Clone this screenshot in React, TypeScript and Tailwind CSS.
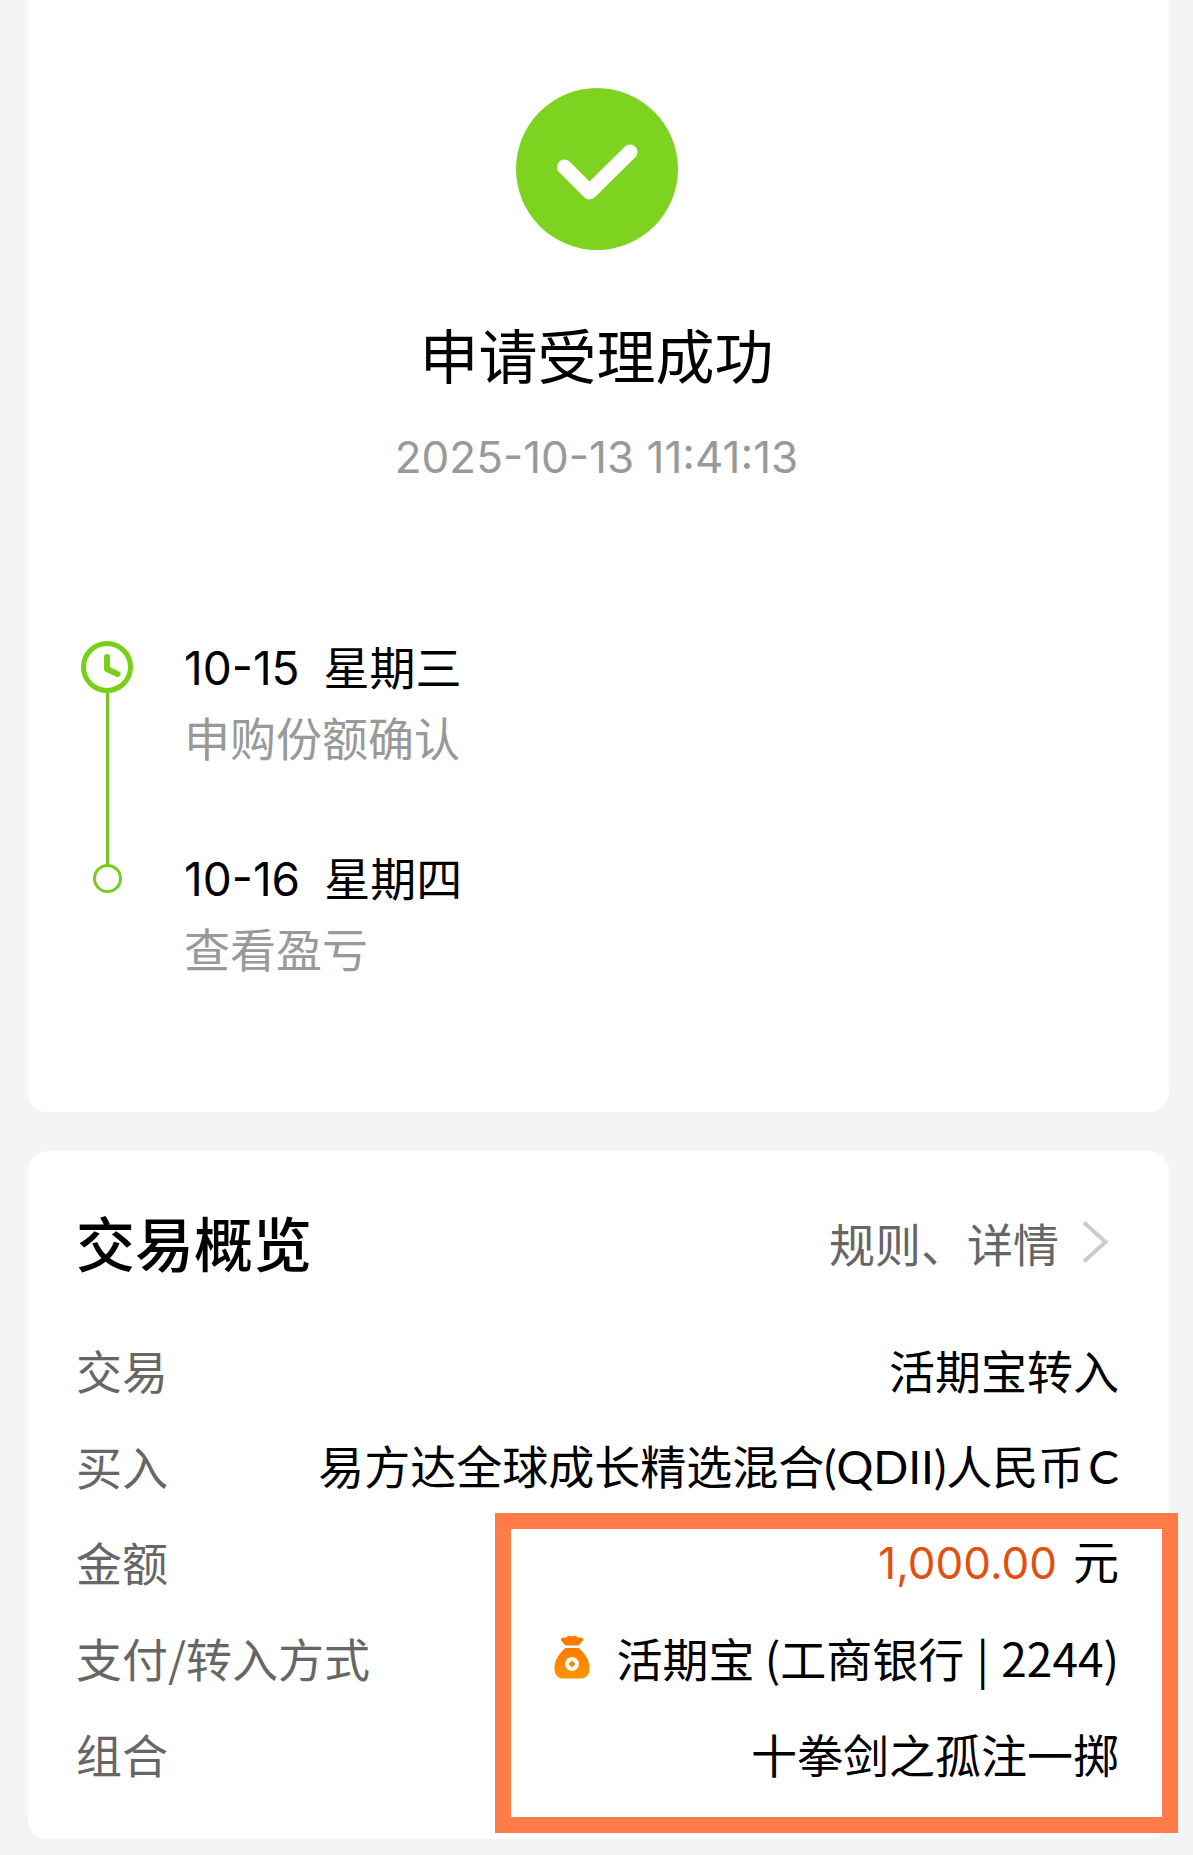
import type { ReactNode } from "react";

function SuccessIcon() {
  return (
    <svg className="size-[162px]" viewBox="0 0 162 162" aria-hidden="true">
      <circle cx="81" cy="81" r="81" fill="#7ed321" />
      <path
        d="M48.5 79 L73.5 104 L114 64"
        fill="none"
        stroke="#fff"
        strokeWidth="15"
        strokeLinecap="round"
        strokeLinejoin="round"
      />
    </svg>
  );
}

function ClockIcon() {
  return (
    <svg className="size-[52px] shrink-0" viewBox="0 0 52 52" fill="none" stroke="#76d016" aria-hidden="true">
      <circle cx="26" cy="26" r="23.5" strokeWidth="5" />
      <path d="M26 16 V28 L36.5 33" strokeWidth="6" strokeLinecap="round" strokeLinejoin="round" />
    </svg>
  );
}

function MoneyBagIcon() {
  return (
    <svg className="h-11 w-9 shrink-0" viewBox="0 0 36 44" aria-hidden="true">
      <defs>
        <linearGradient id="bag" x1="0" y1="0" x2="0" y2="1">
          <stop offset="0" stopColor="#ff7a00" />
          <stop offset="1" stopColor="#ff9500" />
        </linearGradient>
      </defs>
      <path
        d="M11.5 10.5 L7 5.5 C6.2 3 8.5 1.8 12 2.8 C13.5 0.2 16 0.2 18 1.4 C20 0.2 22.5 0.2 24 2.8 C27.5 1.8 29.8 3 29 5.5 L24.5 10.5 Z"
        fill="#ff7a00"
      />
      <path
        d="M11.5 13 H24.5 C30 17 35.5 25 35.5 32.5 C35.5 40 32.5 43.5 26.5 43.5 H9.5 C3.5 43.5 0.5 40 0.5 32.5 C0.5 25 6 17 11.5 13 Z"
        fill="url(#bag)"
      />
      <circle cx="18" cy="29" r="7" fill="#fffaf0" />
      <path d="M18 26 L21 29 L18 32 L15 29 Z" fill="#ff8a00" stroke="#ff8a00" strokeLinejoin="round" />
    </svg>
  );
}

function Chevron() {
  return (
    <svg className="h-11 w-7 shrink-0" viewBox="0 0 28 44" fill="none" stroke="#cccccc" strokeWidth="4" aria-hidden="true">
      <path d="M3 2.5 L24.5 22 L3 41.5" />
    </svg>
  );
}

function StepText({ date, day, note }: { date: string; day: string; note: string }) {
  return (
    <div className="leading-[71px]">
      <p className="flex h-[71px] items-baseline gap-6 text-black">
        <span className="font-['Inter','Noto_Sans_CJK_SC',sans-serif]">{date}</span>
        <span>{day}</span>
      </p>
      <p className="text-[#999999]">{note}</p>
    </div>
  );
}

function Row({ label, children }: { label: string; children: ReactNode }) {
  return (
    <div className="flex h-24 items-center justify-between">
      <dt className="whitespace-nowrap text-[#666666]">{label}</dt>
      <dd className="flex items-center whitespace-nowrap text-black">{children}</dd>
    </div>
  );
}

export default function App() {
  return (
    <main
      lang="zh-CN"
      className="min-h-screen bg-[#f4f4f4] pr-6 pb-4 pl-7 font-['Noto_Sans_CJK_SC',sans-serif] text-[46px] leading-[60px]"
    >
      <section className="rounded-b-[20px] bg-white px-12 pt-[88px] pb-[129px]">
        <header className="flex flex-col items-center pr-1">
          <SuccessIcon />
          <h1 className="mt-16 text-[59px] leading-[80px] text-black">申请受理成功</h1>
          <time className="mt-[33px] font-['Inter','Noto_Sans_CJK_SC',sans-serif] text-[44px] text-[#999999]">
            2025-10-13 11:41:13
          </time>
        </header>

        <ol className="mt-[143px] pl-0.5">
          <li className="flex gap-12">
            <div className="flex w-[58px] flex-col items-center pt-[11px]">
              <ClockIcon />
              <div className="w-[3px] grow bg-[#76c42a]" />
            </div>
            <div className="pb-[69px]">
              <StepText date="10-15" day="星期三" note="申购份额确认" />
            </div>
          </li>
          <li className="flex gap-12">
            <div className="flex w-[58px] flex-col items-center">
              <div className="h-[23px] w-[3px] bg-[#76c42a]" />
              <div className="size-[29px] rounded-full border-[3px] border-[#76cc1e]" />
            </div>
            <StepText date="10-16" day="星期四" note="查看盈亏" />
          </li>
        </ol>
      </section>

      <section className="mt-[39px] rounded-[20px] bg-white pt-[51px] pr-[50px] pb-[38px] pl-12">
        <div className="flex items-center justify-between">
          <h2 className="text-[59px] leading-[80px] font-medium text-black">交易概览</h2>
          <a href="#details" className="flex items-center gap-[22px] pr-2.5 text-[#666666]">
            规则、详情
            <Chevron />
          </a>
        </div>
        <dl className="mt-[39px]">
          <Row label="交易">活期宝转入</Row>
          <Row label="买入">
            <span>
              易方达全球成长精选混合<span className="font-['Lato',sans-serif]">(QDII)</span>人民币
              <span className="ml-1 font-['Lato',sans-serif]">C</span>
            </span>
          </Row>
          <div className="relative">
            <Row label="金额">
              <span className="flex items-baseline gap-4">
                <span className="font-['Inter',sans-serif] text-[44px] text-[#e2500f]">1,000.00</span>
                <span>元</span>
              </span>
            </Row>
            <Row label="支付/转入方式">
              <MoneyBagIcon />
              <span className="ml-[26px]">
                活期宝 (工商银行 <span className="mx-0.5">|</span> 2244)
              </span>
            </Row>
            <Row label="组合">十拳剑之孤注一掷</Row>
            <div className="pointer-events-none absolute top-0 -right-[59px] -bottom-8 w-[683px] border-[16px] border-[#ff7b47]" />
          </div>
        </dl>
      </section>
    </main>
  );
}
